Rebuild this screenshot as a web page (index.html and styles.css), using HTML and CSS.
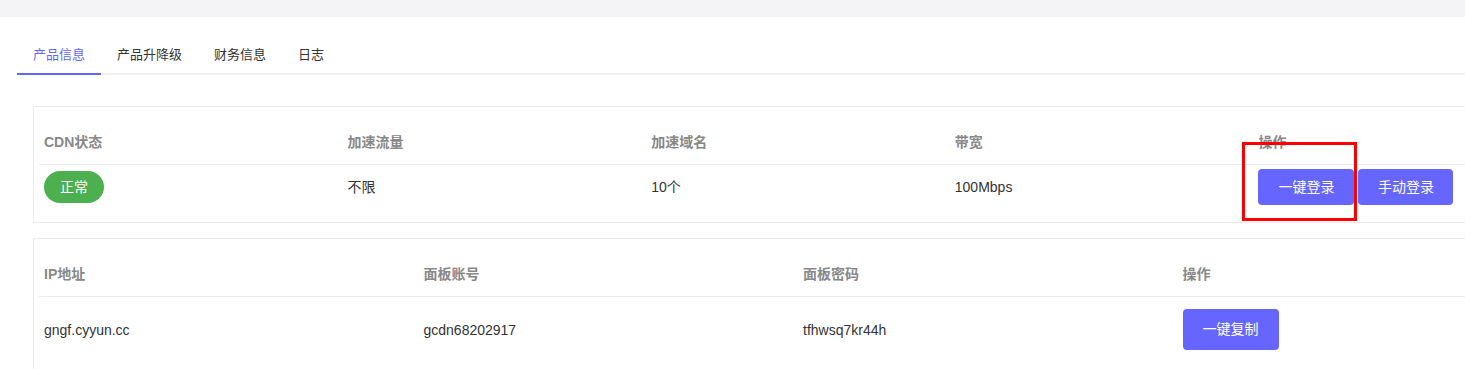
FILE: index.html
```html
<!DOCTYPE html>
<html lang="zh-CN">
<head>
<meta charset="utf-8">
<title>产品信息</title>
<link rel="stylesheet" href="styles.css">
</head>
<body>
<div class="topbar"></div>
<div class="tabs">
  <div class="tab active">产品信息</div>
  <div class="tab">产品升降级</div>
  <div class="tab">财务信息</div>
  <div class="tab">日志</div>
</div>
<div class="content">
  <div class="card card-first">
    <div class="grid cols5 head">
      <div class="cell">CDN状态</div>
      <div class="cell">加速流量</div>
      <div class="cell">加速域名</div>
      <div class="cell">带宽</div>
      <div class="cell">操作</div>
    </div>
    <div class="grid cols5 body row-sm">
      <div class="cell"><span class="badge">正常</span></div>
      <div class="cell">不限</div>
      <div class="cell">10个</div>
      <div class="cell">100Mbps</div>
      <div class="cell actions"><button class="btn">一键登录</button><button class="btn">手动登录</button></div>
    </div>
    <div class="highlight"></div>
  </div>
  <div class="card">
    <div class="grid cols4 head">
      <div class="cell">IP地址</div>
      <div class="cell">面板账号</div>
      <div class="cell">面板密码</div>
      <div class="cell">操作</div>
    </div>
    <div class="grid cols4 body row-lg">
      <div class="cell">gngf.cyyun.cc</div>
      <div class="cell">gcdn68202917</div>
      <div class="cell">tfhwsq7kr44h</div>
      <div class="cell"><button class="btn btn-tall">一键复制</button></div>
    </div>
  </div>
</div>
</body>
</html>
```
FILE: styles.css
```css
html, body {
  margin: 0;
  padding: 0;
  overflow: hidden;
  background: #fff;
}
body {
  font-family: "Liberation Sans", "Noto Sans CJK SC", sans-serif;
  font-size: 14px;
  color: #333;
  width: 1465px;
  height: 369px;
}
.topbar {
  height: 17px;
  background: #f4f4f7;
}
.tabs {
  margin: 18px 0 0 17px;
  display: flex;
  border-bottom: 2px solid #f1f1f3;
}
.tab {
  padding: 0 16px;
  height: 38px;
  line-height: 39px;
  font-size: 13px;
  color: #333;
  border-bottom: 2px solid transparent;
  margin-bottom: -2px;
}
.tab.active {
  color: #6464ff;
  border-bottom-color: #6464ff;
}
.content {
  padding: 31px 0 0 33px;
  display: flex;
  flex-direction: column;
  gap: 15px;
}
.card {
  position: relative;
  width: 1530px;
  border: 1px solid #ebebf1;
  padding: 13px 5px 13px;
  box-sizing: border-box;
  flex-shrink: 0;
}
.grid {
  display: grid;
  width: 1518px;
}
.cols5 { grid-template-columns: repeat(5, 1fr); }
.cols4 { grid-template-columns: repeat(4, 1fr); }
.head {
  height: 44px;
  border-bottom: 1px solid #ebebf3;
  align-items: center;
  font-weight: bold;
  color: #888;
}
.body { align-items: center; }
.row-sm { height: 44px; }
.row-lg { height: 65px; }
.cell {
  padding-left: 5px;
  line-height: 20px;
  white-space: nowrap;
}
.badge {
  display: inline-block;
  width: 60px;
  height: 32px;
  line-height: 32px;
  text-align: center;
  border-radius: 16px;
  background: #4caf50;
  color: #fff;
  vertical-align: middle;
}
.actions {
  display: flex;
  gap: 4px;
}
.btn {
  font-family: inherit;
  font-size: 14px;
  color: #fff;
  background: #6666ff;
  border: none;
  border-radius: 4px;
  width: 96px;
  height: 36px;
  padding: 0;
  margin: 0;
  line-height: 36px;
}
.actions .btn + .btn { width: 95px; }
.btn-tall {
  height: 41px;
  line-height: 41px;
}
.highlight {
  position: absolute;
  left: 1208px;
  top: 35px;
  width: 115px;
  height: 79px;
  border: 3px solid #ff0000;
  box-sizing: border-box;
}
```
